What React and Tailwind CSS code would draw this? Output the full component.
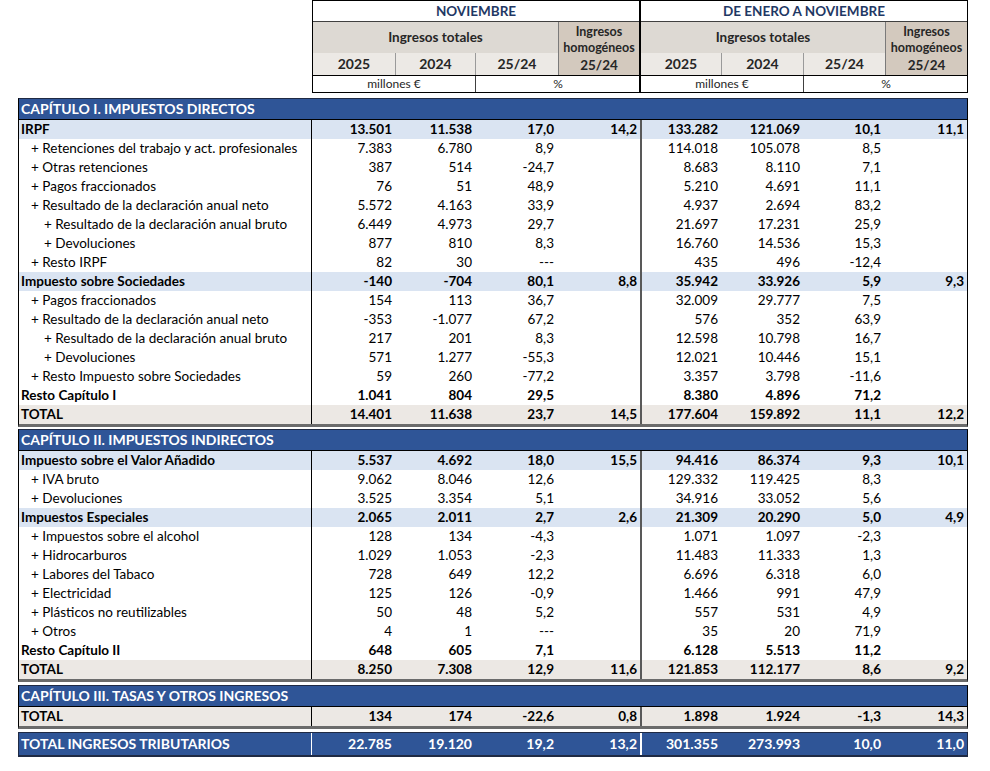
import React from "react";

const NUMW = ["w-[83px]", "w-[80px]", "w-[82px]", "w-[83px]", "w-[81px]", "w-[82px]", "w-[81px]", "w-[83px]"];

const ch1 = [
  ["IRPF", "head", 0, ["13.501", "11.538", "17,0", "14,2", "133.282", "121.069", "10,1", "11,1"]],
  ["+ Retenciones del trabajo y act. profesionales", "n", 1, ["7.383", "6.780", "8,9", "", "114.018", "105.078", "8,5", ""]],
  ["+ Otras retenciones", "n", 1, ["387", "514", "-24,7", "", "8.683", "8.110", "7,1", ""]],
  ["+ Pagos fraccionados", "n", 1, ["76", "51", "48,9", "", "5.210", "4.691", "11,1", ""]],
  ["+ Resultado de la declaración anual neto", "n", 1, ["5.572", "4.163", "33,9", "", "4.937", "2.694", "83,2", ""]],
  ["+ Resultado de la declaración anual bruto", "n", 2, ["6.449", "4.973", "29,7", "", "21.697", "17.231", "25,9", ""]],
  ["+ Devoluciones", "n", 2, ["877", "810", "8,3", "", "16.760", "14.536", "15,3", ""]],
  ["+ Resto IRPF", "n", 1, ["82", "30", "---", "", "435", "496", "-12,4", ""]],
  ["Impuesto sobre Sociedades", "head", 0, ["-140", "-704", "80,1", "8,8", "35.942", "33.926", "5,9", "9,3"]],
  ["+ Pagos fraccionados", "n", 1, ["154", "113", "36,7", "", "32.009", "29.777", "7,5", ""]],
  ["+ Resultado de la declaración anual neto", "n", 1, ["-353", "-1.077", "67,2", "", "576", "352", "63,9", ""]],
  ["+ Resultado de la declaración anual bruto", "n", 2, ["217", "201", "8,3", "", "12.598", "10.798", "16,7", ""]],
  ["+ Devoluciones", "n", 2, ["571", "1.277", "-55,3", "", "12.021", "10.446", "15,1", ""]],
  ["+ Resto Impuesto sobre Sociedades", "n", 1, ["59", "260", "-77,2", "", "3.357", "3.798", "-11,6", ""]],
  ["Resto Capítulo I", "bold", 0, ["1.041", "804", "29,5", "", "8.380", "4.896", "71,2", ""]],
  ["TOTAL", "total", 0, ["14.401", "11.638", "23,7", "14,5", "177.604", "159.892", "11,1", "12,2"]],
];

const ch2 = [
  ["Impuesto sobre el Valor Añadido", "head", 0, ["5.537", "4.692", "18,0", "15,5", "94.416", "86.374", "9,3", "10,1"]],
  ["+ IVA bruto", "n", 1, ["9.062", "8.046", "12,6", "", "129.332", "119.425", "8,3", ""]],
  ["+ Devoluciones", "n", 1, ["3.525", "3.354", "5,1", "", "34.916", "33.052", "5,6", ""]],
  ["Impuestos Especiales", "head", 0, ["2.065", "2.011", "2,7", "2,6", "21.309", "20.290", "5,0", "4,9"]],
  ["+ Impuestos sobre el alcohol", "n", 1, ["128", "134", "-4,3", "", "1.071", "1.097", "-2,3", ""]],
  ["+ Hidrocarburos", "n", 1, ["1.029", "1.053", "-2,3", "", "11.483", "11.333", "1,3", ""]],
  ["+ Labores del Tabaco", "n", 1, ["728", "649", "12,2", "", "6.696", "6.318", "6,0", ""]],
  ["+ Electricidad", "n", 1, ["125", "126", "-0,9", "", "1.466", "991", "47,9", ""]],
  ["+ Plásticos no reutilizables", "n", 1, ["50", "48", "5,2", "", "557", "531", "4,9", ""]],
  ["+ Otros", "n", 1, ["4", "1", "---", "", "35", "20", "71,9", ""]],
  ["Resto Capítulo II", "bold", 0, ["648", "605", "7,1", "", "6.128", "5.513", "11,2", ""]],
  ["TOTAL", "total", 0, ["8.250", "7.308", "12,9", "11,6", "121.853", "112.177", "8,6", "9,2"]],
];

const ch3 = [["TOTAL", "total", 0, ["134", "174", "-22,6", "0,8", "1.898", "1.924", "-1,3", "14,3"]]];

function Row({ label, kind, indent, vals }) {
  const bg =
    kind === "head" ? "bg-[#dae4f2] font-bold" : kind === "total" ? "bg-[#ece8e4] font-bold" : kind === "bold" ? "font-bold" : "";
  const pad = indent === 2 ? "pl-[25px]" : indent === 1 ? "pl-[12px]" : "pl-[2px]";
  return (
    <div className={`flex h-[19px] leading-[19px] ${bg}`}>
      <div className={`w-[293px] shrink-0 border-r border-black whitespace-nowrap ${pad}`}>{label}</div>
      {vals.map((v, i) => (
        <div
          key={i}
          className={`${NUMW[i]} shrink-0 text-right pr-[3px] ${i === 4 ? "border-l-2 border-[#595959]" : ""} ${i === 7 ? "pr-[2px]" : ""}`}
        >
          {v}
        </div>
      ))}
    </div>
  );
}

function Bar({ title }) {
  return (
    <div className="h-[21px] leading-[20px] bg-[#2f5597] text-white font-bold pl-[2px] border-b border-black text-[14px]">
      {title}
    </div>
  );
}

function Section({ title, rows }) {
  return (
    <div className="border border-black border-t-[#1f2a44] border-b-[3px] border-b-[#6b6b6b]">
      <Bar title={title} />
      {rows.map((r, i) => (
        <Row key={i} label={r[0]} kind={r[1]} indent={r[2]} vals={r[3]} />
      ))}
    </div>
  );
}

function HeaderBlock({ title, widths }) {
  return (
    <div className="w-[328px] shrink-0 border border-black">
      <div className="h-[21px] leading-[21px] text-center font-bold text-[#1f3864] border-b border-[#404040] text-[13.5px]">
        {title}
      </div>
      <div className="flex h-[53px]">
        <div className="flex flex-col" style={{ width: widths[0] + widths[1] + widths[2] }}>
          <div className="h-[31px] leading-[31px] bg-[#ddd9d3] text-center font-bold text-[#262626] text-[13.5px]">
            Ingresos totales
          </div>
          <div className="h-[22px] leading-[22px] flex bg-[#ece9e5] font-bold text-[#262626] text-[14px]">
            <div className="text-center border-r border-[#9a9a9a]" style={{ width: widths[0] }}>2025</div>
            <div className="text-center border-r border-[#9a9a9a]" style={{ width: widths[1] }}>2024</div>
            <div className="text-center" style={{ width: widths[2] }}>25/24</div>
          </div>
        </div>
        <div className="flex-1 bg-[#d3c9be] border-l border-[#7a7a7a] flex flex-col items-center justify-center leading-[16px] font-bold text-[#262626] text-[12.5px] pt-[1px]">
          <div>Ingresos</div>
          <div>homogéneos</div>
          <div className="text-[13.5px] leading-[18px]">25/24</div>
        </div>
      </div>
      <div className="flex h-[17px] leading-[16px] border-t border-black text-[12px] text-[#262626]">
        <div className="text-center border-r border-[#404040]" style={{ width: widths[0] + widths[1] }}>millones €</div>
        <div className="flex-1 text-center pl-[1px]">%</div>
      </div>
    </div>
  );
}

export default function App() {
  return (
    <div
      className="bg-white w-[990px] h-[771px] text-[13.5px] text-black pl-[18px]"
      style={{ fontFamily: "Lato, 'Noto Sans', sans-serif" }}
    >
      <div className="w-[950px]">
        <div className="flex">
          <div className="w-[294px] shrink-0" />
          <HeaderBlock title="NOVIEMBRE" widths={[83, 80, 82]} />
          <HeaderBlock title="DE ENERO A NOVIEMBRE" widths={[81, 82, 81]} />
        </div>
        <div className="mt-[5px]">
          <Section title="CAPÍTULO I. IMPUESTOS DIRECTOS" rows={ch1} />
        </div>
        <div className="mt-[2px]">
          <Section title="CAPÍTULO II. IMPUESTOS INDIRECTOS" rows={ch2} />
        </div>
        <div className="mt-[3px]">
          <Section title="CAPÍTULO III. TASAS Y OTROS INGRESOS" rows={ch3} />
        </div>
        <div className="mt-[3px] border border-[#1f2a44] border-b-2 border-b-[#1f2a44] bg-[#2f5597] text-white font-bold text-[14px]">
          <div className="flex h-[22px] leading-[22px]">
            <div className="w-[293px] shrink-0 border-r border-white pl-[2px]">TOTAL INGRESOS TRIBUTARIOS</div>
            {["22.785", "19.120", "19,2", "13,2", "301.355", "273.993", "10,0", "11,0"].map((v, i) => (
              <div
                key={i}
                className={`${NUMW[i]} shrink-0 text-right pr-[3px] ${i === 4 ? "border-l-2 border-white" : ""} ${i === 7 ? "pr-[2px]" : ""}`}
              >
                {v}
              </div>
            ))}
          </div>
        </div>
      </div>
    </div>
  );
}
